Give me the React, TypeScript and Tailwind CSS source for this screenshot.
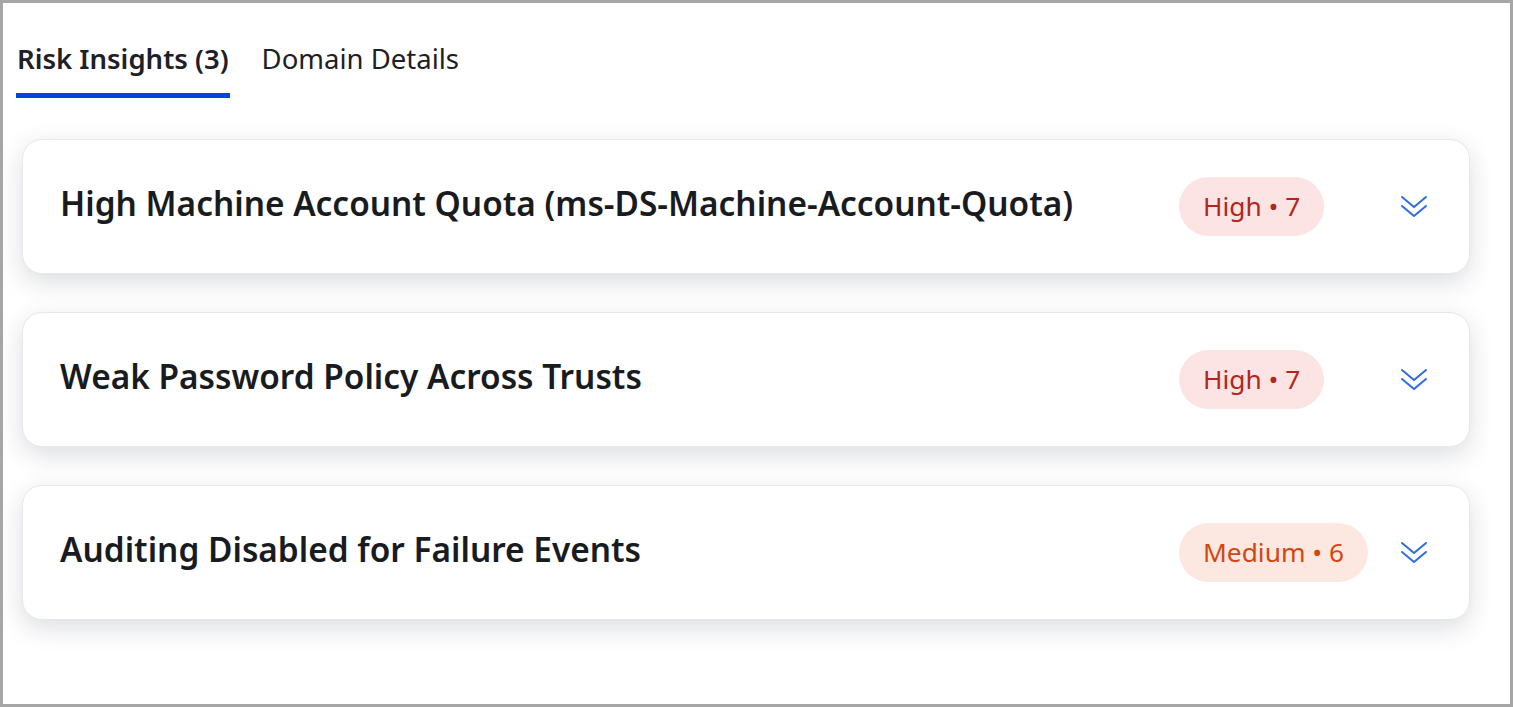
import React from "react";

type Item = { title: string; level: string; count: number; medium?: boolean };

const items: Item[] = [
  { title: "High Machine Account Quota (ms-DS-Machine-Account-Quota)", level: "High", count: 7 },
  { title: "Weak Password Policy Across Trusts", level: "High", count: 7 },
  { title: "Auditing Disabled for Failure Events", level: "Medium", count: 6, medium: true },
];

function DoubleChevron() {
  return (
    <svg width="30" height="28" viewBox="0 0 30 28" fill="none" stroke="#2f6be3" strokeWidth="2" strokeLinecap="round" strokeLinejoin="round">
      <polyline points="3,4 15,14 27,4" />
      <polyline points="3,13 15,23 27,13" />
    </svg>
  );
}

export default function App() {
  return (
    <div
      className="w-[1513px] h-[707px] border-[3px] border-[#a6a6a6] bg-white flex flex-col overflow-hidden"
      style={{ fontFamily: '"Noto Sans", "Open Sans", sans-serif' }}
    >
      <div className="flex items-end gap-[32px] pl-[13px] pt-[37px]">
        <div className="flex flex-col">
          <span className="text-[27.5px] font-semibold text-[#1d2026] leading-[38px] px-[1px]">Risk Insights (3)</span>
          <div className="mt-[15px] h-[5px] bg-[#0345d9]" />
        </div>
        <div className="flex flex-col">
          <span className="text-[27.5px] text-[#1d2026] leading-[38px]">Domain Details</span>
          <div className="mt-[15px] h-[5px]" />
        </div>
      </div>
      <div className="w-[1486px] overflow-hidden mt-[16px] pt-[25px] pb-[38px] px-[19px] flex flex-col gap-[38px]">
        {items.map((it) => (
          <div
            key={it.title}
            className="h-[135px] rounded-[20px] border border-[#e6e8ee] bg-white shadow-[0_8px_26px_rgba(20,30,50,0.15)] flex items-center pl-[37px] pr-[40px]"
          >
            <span className="flex-1 text-[33.4px] font-semibold text-[#181b20] pb-[6px]">{it.title}</span>
            <div className="w-[190px] flex">
              <span
                className={
                  it.medium
                    ? "h-[59px] px-[24px] rounded-full bg-[#fde8e1] text-[#d2470f] text-[26.3px] flex items-center"
                    : "h-[59px] px-[24px] rounded-full bg-[#fde4e4] text-[#b3261b] text-[26.3px] flex items-center"
                }
              >
                {it.level} • {it.count}
              </span>
            </div>
            <span className="ml-[30px] flex items-center">
              <DoubleChevron />
            </span>
          </div>
        ))}
      </div>
    </div>
  );
}
